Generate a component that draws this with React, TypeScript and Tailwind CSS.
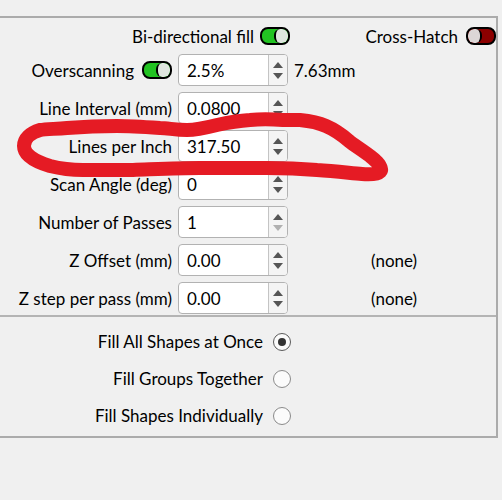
import React from "react";

function Toggle({ on }: { on: boolean }) {
  if (on) {
    return (
      <div className="flex h-[18px] w-[30px] shrink-0 justify-end overflow-hidden rounded-[8px] border-2 border-black bg-[#22c322]">
        <div className="h-full w-[14px] rounded-[6px] border-l-2 border-black bg-[#dfe6df]" />
      </div>
    );
  }
  return (
    <div className="flex h-[18px] w-[30px] shrink-0 justify-start overflow-hidden rounded-[8px] border-2 border-black bg-[#8c0000]">
      <div className="h-full w-[14px] rounded-[6px] border-r-2 border-black bg-[#dcd6d6]" />
    </div>
  );
}

function Spin({ value, downDisabled }: { value: string; downDisabled?: boolean }) {
  return (
    <div className="flex h-[32px] w-[110px] overflow-hidden rounded-[4px] border border-[#b2b2b2] bg-white">
      <div className="flex flex-1 items-center pl-[8px] text-black">{value}</div>
      <div className="flex w-[19px] flex-col items-center justify-center gap-[5px] border-l border-[#c4c4c4] bg-[#f4f4f4]">
        <svg width="10" height="6" viewBox="0 0 10 6">
          <path d="M5 0 L10 6 L0 6 Z" fill="#555" />
        </svg>
        <svg width="10" height="6" viewBox="0 0 10 6">
          <path d="M0 0 L10 0 L5 6 Z" fill={downDisabled ? "#b0b0b0" : "#555"} />
        </svg>
      </div>
    </div>
  );
}

function Radio({ checked }: { checked?: boolean }) {
  return (
    <div
      className={
        "flex h-[18px] w-[18px] shrink-0 items-center justify-center rounded-full border bg-[#fbfbfb] " +
        (checked ? "border-[#5a5a5a]" : "border-[#8a8a8a]")
      }
    >
      {checked && <div className="h-[8px] w-[8px] rounded-full bg-[#333]" />}
    </div>
  );
}

const rows: { label: string; value: string; extra?: string; toggle?: boolean; downDisabled?: boolean }[] = [
  { label: "Overscanning", value: "2.5%", extra: "7.63mm", toggle: true },
  { label: "Line Interval (mm)", value: "0.0800" },
  { label: "Lines per Inch", value: "317.50" },
  { label: "Scan Angle (deg)", value: "0" },
  { label: "Number of Passes", value: "1", downDisabled: true },
  { label: "Z Offset (mm)", value: "0.00", extra: "(none)" },
  { label: "Z step per pass (mm)", value: "0.00", extra: "(none)" },
];

export default function App() {
  return (
    <div
      className="relative h-[500px] w-[502px] overflow-hidden bg-[#f0f0f0] text-[17px] leading-none text-black"
      style={{ fontFamily: "Lato, 'Noto Sans', sans-serif" }}
    >
      <div className="mt-[16px] w-[498px] border-b-2 border-r-2 border-t-2 border-[#ababab]">
        {/* header */}
        <div className="flex h-[36px] items-center">
          <div className="flex w-[290px] items-center justify-end gap-[6px]">
            <span>Bi-directional fill</span>
            <Toggle on />
          </div>
          <div className="flex flex-1 items-center justify-end gap-[8px] pr-[0px]">
            <span>Cross-Hatch</span>
            <Toggle on={false} />
          </div>
        </div>

        {/* spin rows */}
        <div className="grid grid-cols-[172px_110px_1fr] gap-x-[6px] gap-y-[6px] pb-[1px]">
          {rows.map((r) => (
            <React.Fragment key={r.label}>
              <div className="flex h-[32px] items-center justify-end gap-[8px] whitespace-nowrap">
                <span>{r.label}</span>
                {r.toggle && <Toggle on />}
              </div>
              <Spin value={r.value} downDisabled={r.downDisabled} />
              <div className="flex h-[32px] items-center">
                {r.extra === "7.63mm" && <span>7.63mm</span>}
                {r.extra === "(none)" && <span className="pl-[77px]">(none)</span>}
              </div>
            </React.Fragment>
          ))}
        </div>

        <div className="h-[2px] bg-[#b4b4b4]" />

        {/* radios */}
        <div className="flex flex-col pb-[2px] pt-[6px]">
          {[
            { t: "Fill All Shapes at Once", c: true },
            { t: "Fill Groups Together", c: false },
            { t: "Fill Shapes Individually", c: false },
          ].map((o) => (
            <div key={o.t} className="flex h-[37px] w-[291px] items-center justify-end gap-[10px]">
              <span>{o.t}</span>
              <Radio checked={o.c} />
            </div>
          ))}
        </div>
      </div>

      {/* red hand-drawn annotation */}
      <svg className="pointer-events-none absolute left-0 top-0" width="502" height="500" viewBox="0 0 502 500">
        <path
          d="M40 130 C30 133 24 139 24 146 C24 154 33 161 50 166 C62 169 72 170 83 170 L133 170 C160 169 180 168 200 168 L267 168 C290 168 305 169 317 170 C335 171 350 173 362 174 C375 175 382 173 381 169 C380 164 375 160 370 156 C362 150 354 145 349 141 C341 134 333 129 326 126 C317 122 310 121 300 120 L283 120 C270 119 260 119 250 120 C235 121 226 123 217 125 C205 128 196 130 187 130 C175 130 168 128 160 128 C145 127 130 126 117 126 C98 126 80 127 67 128 C55 129 46 129 40 130 Z"
          fill="none"
          stroke="#e51b24"
          strokeWidth="14"
          strokeLinejoin="round"
          strokeLinecap="round"
        />
      </svg>
    </div>
  );
}
